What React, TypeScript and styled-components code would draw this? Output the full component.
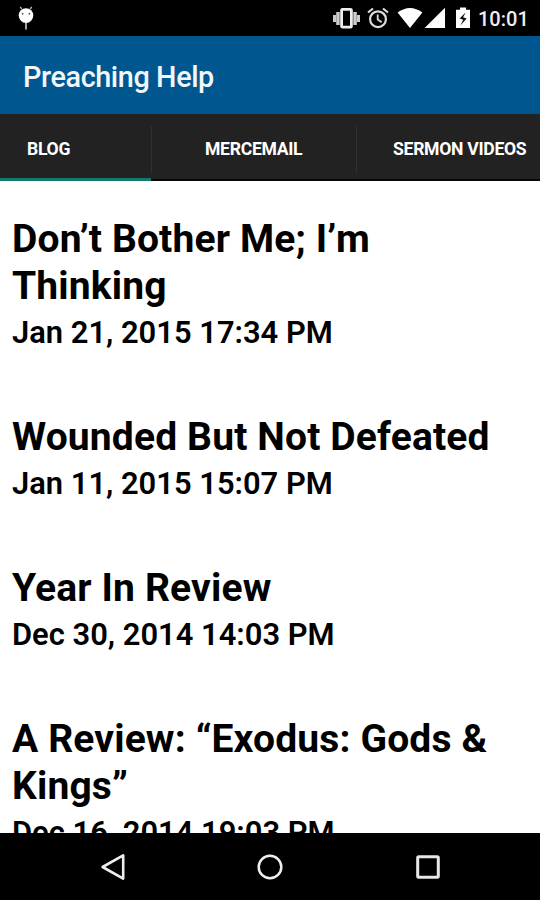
import React from "react";
import styled, { createGlobalStyle } from "styled-components";

const Global = createGlobalStyle`
  * { box-sizing: border-box; }
  body { margin: 0; background: #fff; font-family: Roboto, sans-serif; }
  svg { display: block; flex: none; }
`;
const Screen = styled.div`
  width: 540px;
  height: 900px;
  overflow: hidden;
  display: flex;
  flex-direction: column;
  background: #fff;
`;
const StatusBar = styled.header`
  height: 36px;
  flex: none;
  background: #000;
  color: #fff;
  display: flex;
  align-items: center;
  justify-content: space-between;
  padding: 0 13px 0 17px;
`;
const StatusIcons = styled.div`
  display: flex;
  align-items: center;
`;
const Clock = styled.span`
  width: 49px;
  margin-left: 8px;
  padding-top: 2px;
  font-size: 20px;
  font-weight: 500;
  line-height: 34px;
  color: #eee;
  white-space: nowrap;
`;
const AppBar = styled.div`
  height: 78px;
  flex: none;
  background: #00568f;
  display: flex;
  align-items: center;
  padding: 3px 0 0 23px;
`;
const Title = styled.h1`
  margin: 0;
  font-size: 28.8px;
  letter-spacing: -0.4px;
  font-weight: 500;
  color: #f1f6fa;
  line-height: 34px;
`;
const Tabs = styled.nav`
  height: 67px;
  flex: none;
  display: flex;
  background: #222;
`;
const Tab = styled.div<{ $width: number; $active?: boolean; $pad: number }>`
  width: ${p => p.$width}px;
  flex: none;
  padding-left: ${p => p.$pad}px;
  font-size: 17.6px;
  letter-spacing: -0.3px;
  font-weight: 700;
  color: #fff;
  line-height: 70px;
  white-space: nowrap;
  box-shadow: inset 0 ${p => (p.$active ? "-3px 0 #14796d" : "-2px 0 #080808")};
`;
const Divider = styled.div`
  width: 1px;
  flex: none;
  background: linear-gradient(#222 12px, #303030 12px, #303030 59px, #222 59px, #222 65px, #080808 65px);
`;
const Feed = styled.main`
  flex: 1;
  min-height: 0;
  overflow: hidden;
  padding: 35px 12px 0;
`;
const Post = styled.article`
  margin-bottom: 59px;
`;
const PostTitle = styled.h2`
  margin: 0;
  font-size: 39px;
  letter-spacing: 0.15px;
  line-height: 47px;
  font-weight: 700;
  color: #000;
  white-space: pre-line;
`;
const PostDate = styled.p`
  margin: 0;
  font-size: 30.9px;
  line-height: 45px;
  font-weight: 600;
  color: #000;
  white-space: nowrap;
`;
const NavBar = styled.footer`
  height: 67px;
  flex: none;
  background: #000;
  display: flex;
  justify-content: center;
  align-items: center;
  gap: 130px;
  padding-left: 2px;
`;

const DebugIcon = () => (
  <svg width="18" height="26" viewBox="0 0 18 26">
    <path d="M4.8 4 3.2 2M13.2 4 14.8 2" stroke="#bbb" strokeWidth="1.3" />
    <ellipse cx="9" cy="10.6" rx="7.3" ry="7.4" fill="#fff" />
    <path d="M9 18v6.5" stroke="#ccc" strokeWidth="1.6" />
    <circle cx="5.6" cy="8.8" r="1" fill="#666" />
    <circle cx="12.4" cy="8.8" r="1" fill="#666" />
  </svg>
);
const VibrateIcon = () => (
  <svg width="27" height="22" viewBox="0 0 27 22">
    <path d="M0 8h3v7H0zM3.2 5h3.5v13H3.2zM20.3 5h3.5v13h-3.5zM24 8h3v7h-3z" fill="#ccc" />
    <rect x="8.6" y="2.3" width="9.8" height="17.8" rx=".8" fill="none" stroke="#eee" strokeWidth="2.8" />
  </svg>
);
const AlarmIcon = () => (
  <svg width="22" height="22" viewBox="0 0 22 22" fill="none" stroke="#ddd">
    <circle cx="11" cy="12.2" r="7.9" strokeWidth="2.2" />
    <path d="M10.7 7.4v5.2l4 2.6" strokeWidth="1.8" />
    <path d="m1 5.5 5-4M21 5.5l-5-4" strokeWidth="2.2" />
  </svg>
);
const WifiIcon = () => (
  <svg width="26" height="22" viewBox="0 0 26 22">
    <path d="M.6 5.6Q13-3.6 25.4 5.6L13 21z" fill="#fff" />
  </svg>
);
const SignalIcon = () => (
  <svg width="21" height="22" viewBox="0 0 21 22">
    <path d="M21 .8V21H.6z" fill="#fff" />
  </svg>
);
const BatteryIcon = () => (
  <svg width="14" height="22" viewBox="0 0 14 22">
    <path d="M4 .4h6v2.3h4V21H0V2.7h4z" fill="#fff" />
    <path d="M9.8 5.2 3.6 11.4l3.6 1.4-2.8 5.7 6.2-6.9-3.5-1.4z" fill="#111" />
  </svg>
);
const Gap = styled.span<{ $size: number }>`
  width: ${p => p.$size}px;
`;

const BackIcon = () => (
  <svg width="26" height="28" viewBox="0 0 26 28">
    <path d="M23.2 2.4v23.2L2.6 14z" fill="none" stroke="#eee" strokeWidth="2.6" strokeLinejoin="round" />
  </svg>
);
const HomeIcon = () => (
  <svg width="28" height="28" viewBox="0 0 28 28">
    <circle cx="14" cy="14" r="11.3" fill="none" stroke="#eee" strokeWidth="2.5" />
  </svg>
);
const RecentIcon = () => (
  <svg width="28" height="28" viewBox="0 0 28 28">
    <rect x="3.7" y="3.7" width="20.6" height="20.6" rx="1" fill="none" stroke="#e8e8e8" strokeWidth="3" />
  </svg>
);

const posts = [
  { title: "Don’t Bother Me; I’m\nThinking", date: "Jan 21, 2015 17:34 PM" },
  { title: "Wounded But Not Defeated", date: "Jan 11, 2015 15:07 PM" },
  { title: "Year In Review", date: "Dec 30, 2014 14:03 PM" },
  { title: "A Review: “Exodus: Gods &\nKings”", date: "Dec 16, 2014 19:03 PM" },
];

export default function App() {
  return (
    <Screen>
      <Global />
      <StatusBar>
        <DebugIcon />
        <StatusIcons>
          <VibrateIcon />
          <Gap $size={7} />
          <AlarmIcon />
          <Gap $size={8} />
          <WifiIcon />
          <Gap $size={1} />
          <SignalIcon />
          <Gap $size={11} />
          <BatteryIcon />
          <Clock>10:01</Clock>
        </StatusIcons>
      </StatusBar>
      <AppBar>
        <Title>Preaching Help</Title>
      </AppBar>
      <Tabs>
        <Tab $width={151} $pad={27} $active>BLOG</Tab>
        <Divider />
        <Tab $width={204} $pad={53}>MERCEMAIL</Tab>
        <Divider />
        <Tab $width={183} $pad={36}>SERMON VIDEOS</Tab>
      </Tabs>
      <Feed>
        {posts.map(post => (
          <Post key={post.date}>
            <PostTitle>{post.title}</PostTitle>
            <PostDate>{post.date}</PostDate>
          </Post>
        ))}
      </Feed>
      <NavBar>
        <BackIcon />
        <HomeIcon />
        <RecentIcon />
      </NavBar>
    </Screen>
  );
}
